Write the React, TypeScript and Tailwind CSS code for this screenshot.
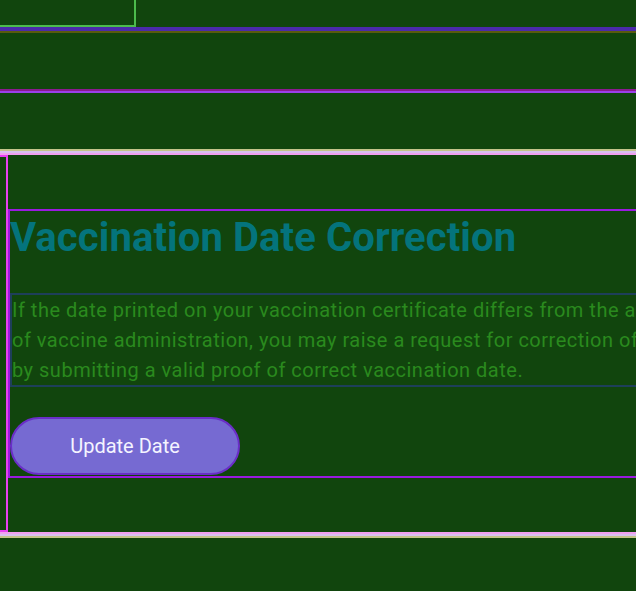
import React from "react";

export default function App() {
  return (
    <div
      className="w-[636px] h-[591px] overflow-hidden bg-[#11450d]"
      style={{ fontFamily: "Roboto, 'Noto Sans', sans-serif" }}
    >
      <div className="h-[31px] border-b-4 border-[#4b2aaa]">
        <div className="w-[136px] h-[27px] border-r-2 border-b-2 border-[#4cbb4c]" />
      </div>
      <div className="h-[60px] border-t-2 border-b-2 border-t-[#5a5a0f] border-b-[#8a1a8e]" />
      <div className="h-[58px] border-t-2 border-[#9b40e8]" />
      <div className="border-y-2 border-[#c4c48a]">
        <div className="border-y-2 border-[#d8c0f0]">
          <div className="border-y-2 border-[#f0a0f0]">
            <div className="flex h-[377px]">
              <div className="w-[8px] shrink-0 border-r-2 border-y-2 border-[#e840f0]" />
              <div className="py-[54px] shrink-0">
                <div className="w-[900px] border-l-2 border-y-2 border-[#9a1ae0] pb-[1px]">
                  <h1 className="mt-[3px] text-[40px] leading-[47px] font-bold text-[#04747c] tracking-[0.1px]">
                    Vaccination Date Correction
                  </h1>
                  <p className="mt-[32px] w-[860px] border-2 border-r-0 border-[#1e3f5a] text-[20px] leading-[30px] text-[#2a8a1e] tracking-[0.5px] whitespace-nowrap">
                    If the date printed on your vaccination certificate differs from the actual date
                    <br />
                    of vaccine administration, you may raise a request for correction of the date
                    <br />
                    by submitting a valid proof of correct vaccination date.
                  </p>
                  <button className="mt-[30px] w-[230px] h-[58px] rounded-full border-2 border-[#6a2ec8] bg-[#766ad2] text-[20px] text-[#f4f4ff]">
                    Update Date
                  </button>
                </div>
              </div>
            </div>
          </div>
        </div>
      </div>
    </div>
  );
}
